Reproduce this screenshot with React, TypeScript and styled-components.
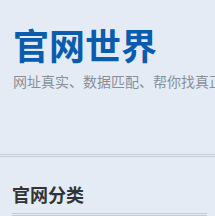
import styled, { createGlobalStyle } from "styled-components";

const GlobalStyle = createGlobalStyle`
    body {
        margin: 0;
        background-color: #e4ebf5;
        font-family: "Liberation Sans", "Noto Sans CJK SC", sans-serif;
        overflow: hidden;
    }
`;

const App = () => {
    return (
        <Page>
            <GlobalStyle />
            <Header>
                <Logo>官网世界</Logo>
                <Slogan>网址真实、数据匹配、帮你找真正的官方网站</Slogan>
            </Header>
            <Divider />
            <Section>
                <SectionTitle>官网分类</SectionTitle>
            </Section>
        </Page>
    );
};

export default App;

const Page = styled.div`
    width: 215px;
    height: 216px;
    overflow: hidden;
`;

const Header = styled.header`
    padding: 24px 0 0 13px;
    height: 130px;
    box-sizing: border-box;
`;

const Logo = styled.h1`
    margin: 0;
    font-size: 36px;
    line-height: 48px;
    font-weight: bold;
    color: #0b5cad;
`;

const Slogan = styled.p`
    margin: 0;
    font-size: 14px;
    line-height: 20px;
    color: #8a8f96;
    white-space: nowrap;
`;

const Divider = styled.hr`
    margin: 24px 0 0;
    height: 0;
    border: none;
    border-top: 3px double #c5ccd5;
`;

const Section = styled.section`
    padding: 26px 8px 0 12px;
`;

const SectionTitle = styled.h2`
    margin: 0;
    padding-bottom: 4px;
    font-size: 18px;
    line-height: 26px;
    font-weight: bold;
    color: #333;
    border-bottom: 3px double #c5ccd5;
`;
